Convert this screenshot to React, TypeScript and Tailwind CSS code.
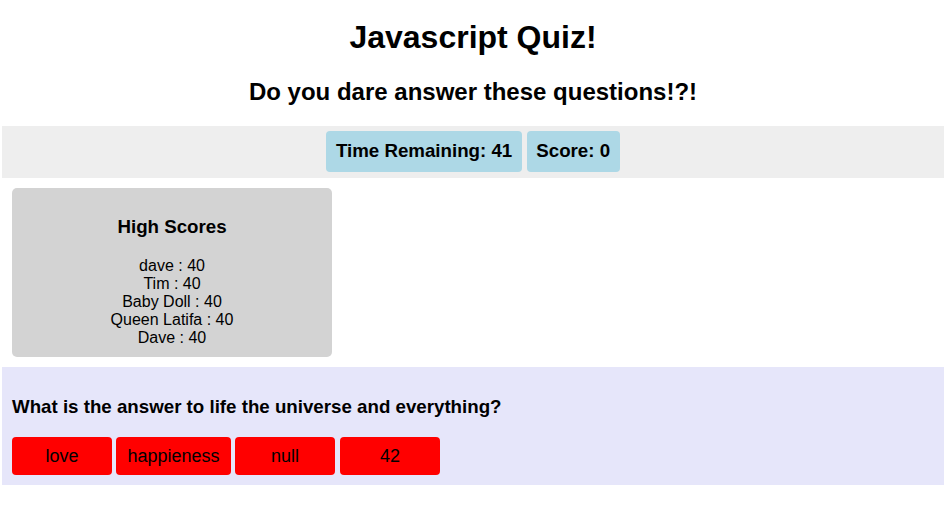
const scores = [
  { name: 'dave', score: 40 },
  { name: 'Tim', score: 40 },
  { name: 'Baby Doll', score: 40 },
  { name: 'Queen Latifa', score: 40 },
  { name: 'Dave', score: 40 },
]

const answers = ['love', 'happieness', 'null', '42']

export default function App() {
  return (
    <div className="min-h-[510px] bg-white text-black font-['Liberation_Sans',Arial,sans-serif]">
      <div className="ml-[2px] w-[942px]">
        <header className="text-center">
          <h1 className="pt-[19px] text-[32px] leading-[37px] font-bold">Javascript Quiz!</h1>
          <h2 className="mt-[22px] text-[24px] leading-[28px] font-bold">Do you dare answer these questions!?!</h2>
        </header>

        <div className="mt-[20px] flex h-[52px] items-start justify-center gap-[5px] bg-[#eeeeee] pt-[5px]">
          <div className="flex h-[41px] items-center rounded-[4px] bg-[#add8e6] px-[9.5px] text-[18.72px] font-bold">
            Time Remaining: 41
          </div>
          <div className="flex h-[41px] items-center rounded-[4px] bg-[#add8e6] px-[9.5px] text-[18.72px] font-bold">
            Score: 0
          </div>
        </div>

        <div className="mx-[10px] mt-[10px] h-[169px] w-[320px] rounded-[5px] bg-[#d3d3d3] pt-[28px] text-center">
          <h3 className="text-[18.72px] leading-[22px] font-bold">High Scores</h3>
          <ul className="mt-[19px] text-[16px] leading-[18px]">
            {scores.map((s, i) => (
              <li key={i}>
                {s.name} : {s.score}
              </li>
            ))}
          </ul>
        </div>

        <section className="mt-[10px] h-[118px] bg-[#e6e6fa] px-[10px] pt-[29px]">
          <p className="text-[18.72px] leading-[22px] font-bold">What is the answer to life the universe and everything?</p>
          <div className="mt-[19px] flex gap-[4px]">
            {answers.map((a, i) => (
              <button
                key={a}
                className={
                  i === 3
                    ? 'ml-[1px] h-[38px] min-w-[100px] rounded-[4px] bg-[#ff0000] px-[11.5px] text-[18px] text-black'
                    : 'h-[38px] min-w-[100px] rounded-[4px] bg-[#ff0000] px-[11.5px] text-[18px] text-black'
                }
              >
                {a}
              </button>
            ))}
          </div>
        </section>
      </div>
    </div>
  )
}
